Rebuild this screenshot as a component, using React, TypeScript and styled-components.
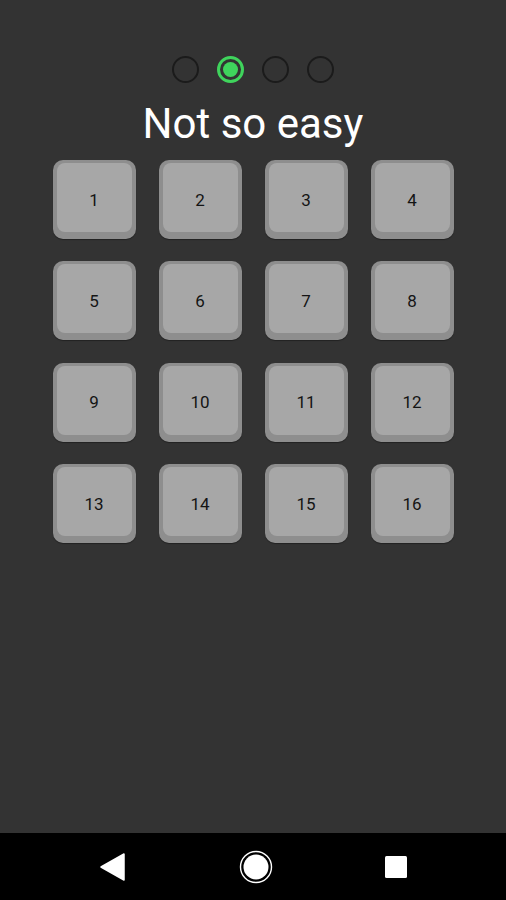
import React from "react";
import styled, { createGlobalStyle } from "styled-components";

const GlobalStyle = createGlobalStyle`
  html, body {
    margin: 0;
    padding: 0;
    background: #333333;
  }
  body {
    font-family: Roboto, "Noto Sans", sans-serif;
  }
`;

const Page = styled.div`
  width: 506px;
  height: 900px;
  display: flex;
  flex-direction: column;
  background: #333333;
  overflow: hidden;
`;

const Screen = styled.div`
  flex: 1;
  display: flex;
  flex-direction: column;
  align-items: center;
`;

const Steps = styled.div`
  display: flex;
  gap: 18px;
  margin-top: 56px;
`;

const Step = styled.div<{ $active?: boolean }>`
  width: 27px;
  height: 27px;
  box-sizing: border-box;
  border-radius: 50%;
  border: ${(p) => (p.$active ? "3px solid #3fd45c" : "2px solid #1b1b1b")};
  padding: ${(p) => (p.$active ? "3px" : "0")};
  background: ${(p) => (p.$active ? "#3fd45c" : "transparent")};
  background-clip: content-box;
`;

const Title = styled.h1`
  margin: 17px 0 0;
  font-family: Roboto, "Noto Sans", sans-serif;
  font-weight: 400;
  font-size: 42px;
  line-height: 48px;
  color: #ffffff;
`;

const Grid = styled.div`
  margin-top: 12px;
  display: grid;
  grid-template-columns: repeat(4, 83px);
  grid-auto-rows: 79px;
  column-gap: 23px;
  row-gap: 22.4px;
`;

const Tile = styled.button`
  all: unset;
  box-sizing: border-box;
  background: #8e8e8e;
  border-radius: 10px;
  padding: 3px 4px 7px;
  display: flex;
  box-shadow: 0 1px 1px rgba(0, 0, 0, 0.35);
`;

const TileFace = styled.span`
  flex: 1;
  display: flex;
  align-items: center;
  justify-content: center;
  background: #a7a7a7;
  border-radius: 8px;
  font-family: Roboto, "Noto Sans", sans-serif;
  font-size: 17px;
  color: #141414;
  padding-top: 4px;
`;

const NavBar = styled.div`
  height: 67px;
  background: #000000;
  display: flex;
  align-items: center;
  justify-content: space-between;
  padding: 0 99px 0 100px;
`;

const NavIcon = styled.svg`
  display: block;
`;

export default function App() {
  const tiles = Array.from({ length: 16 }, (_, i) => i + 1);
  return (
    <Page>
      <GlobalStyle />
      <Screen>
        <Steps>
          <Step />
          <Step $active />
          <Step />
          <Step />
        </Steps>
        <Title>Not so easy</Title>
        <Grid>
          {tiles.map((n) => (
            <Tile key={n}>
              <TileFace>{n}</TileFace>
            </Tile>
          ))}
        </Grid>
      </Screen>
      <NavBar>
        <NavIcon width="26" height="28" viewBox="0 0 26 28">
          <path d="M24 1 L24 27 L1 14 Z" fill="#fff" stroke="#fff" strokeWidth="1.5" strokeLinejoin="round" />
        </NavIcon>
        <NavIcon width="34" height="34" viewBox="0 0 34 34">
          <circle cx="17" cy="17" r="15.5" fill="none" stroke="#fff" strokeWidth="1.4" />
          <circle cx="17" cy="17" r="12.5" fill="#fff" />
        </NavIcon>
        <NavIcon width="22" height="22" viewBox="0 0 22 22">
          <rect x="0" y="0" width="22" height="22" rx="1.5" fill="#fff" />
        </NavIcon>
      </NavBar>
    </Page>
  );
}
